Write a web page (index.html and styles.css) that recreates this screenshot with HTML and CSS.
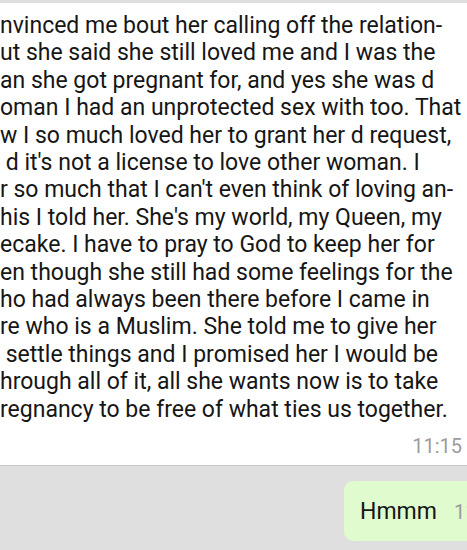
FILE: index.html
```html
<!DOCTYPE html>
<html lang="en">
<head>
<meta charset="utf-8">
<link rel="stylesheet" href="styles.css">
</head>
<body>
<div class="chat">
  <div class="msg-in">
    <div class="msg-text">nvinced me bout her calling off the relation-
ut she said she still loved me and I was the
an she got pregnant for, and yes she was d
oman I had an unprotected sex with too. That
w I so much loved her to grant her d request,
 d it's not a license to love other woman. I
r so much that I can't even think of loving an-
his I told her. She's my world, my Queen, my
ecake. I have to pray to God to keep her for
en though she still had some feelings for the
ho had always been there before I came in
re who is a Muslim. She told me to give her
 settle things and I promised her I would be
hrough all of it, all she wants now is to take
regnancy to be free of what ties us together.</div>
    <div class="msg-time">11:15</div>
  </div>
  <div class="row-out">
    <div class="msg-out">
      <span class="out-text">Hmmm</span>
      <span class="out-time">11:16</span>
    </div>
  </div>
</div>
</body>
</html>
```
FILE: styles.css
```css
html, body {
  margin: 0;
  padding: 0;
  background: #dfdfdf;
  overflow: hidden;
  width: 467px;
  height: 550px;
}
.chat {
  padding-top: 3px;
  font-family: Roboto, "Noto Sans", sans-serif;
}
.msg-in {
  background: #ffffff;
  border-bottom: 1px solid #c8c8c8;
  padding: 9px 5px 7px 0;
}
.msg-text {
  white-space: pre;
  font-size: 23px;
  line-height: 27.4px;
  color: #161616;
}
.msg-time {
  margin-top: 11px;
  text-align: right;
  font-size: 20px;
  line-height: 24px;
  color: #9c9c9c;
}
.row-out {
  display: flex;
  padding-top: 15px;
  padding-left: 344px;
}
.msg-out {
  display: flex;
  align-items: baseline;
  gap: 17px;
  height: 60px;
  box-sizing: border-box;
  padding: 15px 16px 0 16px;
  background: #e0fbce;
  border-radius: 9px;
  white-space: nowrap;
}
.out-text {
  font-size: 23px;
  line-height: 32px;
  color: #161616;
}
.out-time {
  font-size: 20px;
  color: #9c9c9c;
}
```
